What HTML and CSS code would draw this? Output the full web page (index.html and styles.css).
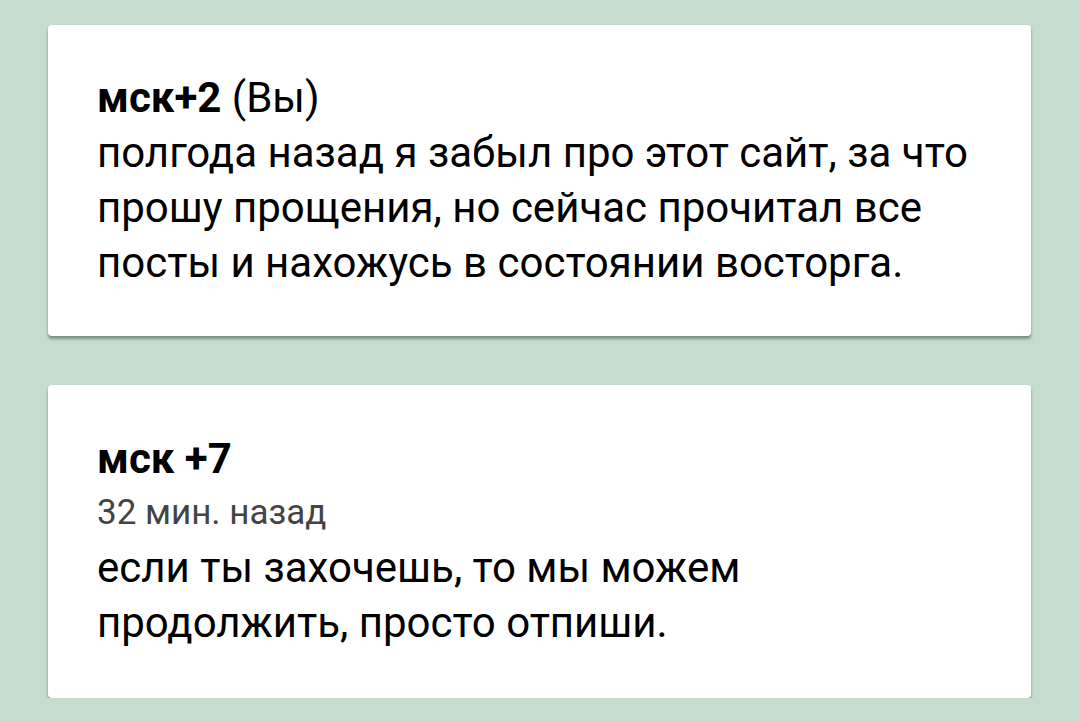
FILE: index.html
```html
<!DOCTYPE html>
<html lang="ru">
<head>
<meta charset="utf-8">
<link rel="stylesheet" href="styles.css">
</head>
<body>
<div class="feed">
  <div class="card">
    <div class="author"><b>мск+2</b> <span class="you">(Вы)</span></div>
    <div class="text">полгода назад я забыл про этот сайт, за что прошу прощения, но сейчас прочитал все посты и нахожусь в состоянии восторга.</div>
  </div>
  <div class="card card2">
    <div class="author"><b>мск +7</b></div>
    <div class="time">32 мин. назад</div>
    <div class="text">если ты захочешь, то мы можем продолжить, просто отпиши.</div>
  </div>
</div>
</body>
</html>
```
FILE: styles.css
```css
html, body {
  margin: 0;
  padding: 0;
  background: #c5ddce;
  font-family: Roboto, "Noto Sans", sans-serif;
  color: #000;
}
.feed {
  padding: 25px 48px 0 48px;
  display: flex;
  flex-direction: column;
  gap: 49px;
}
.card {
  background: #fff;
  border-radius: 4px;
  box-shadow: 0 3px 3px rgba(60, 80, 70, 0.55);
  padding: 45px 49px 0 49px;
  height: 311px;
  box-sizing: border-box;
}
.card2 {
  padding-top: 46px;
  height: 313px;
}
.author {
  font-size: 42px;
  line-height: 55px;
}
.author b {
  font-weight: 700;
}
.you {
  font-weight: 400;
}
.time {
  font-size: 35px;
  line-height: 54px;
  color: #444;
}
.text {
  font-size: 42px;
  line-height: 55px;
  max-width: 885px;
}
```
